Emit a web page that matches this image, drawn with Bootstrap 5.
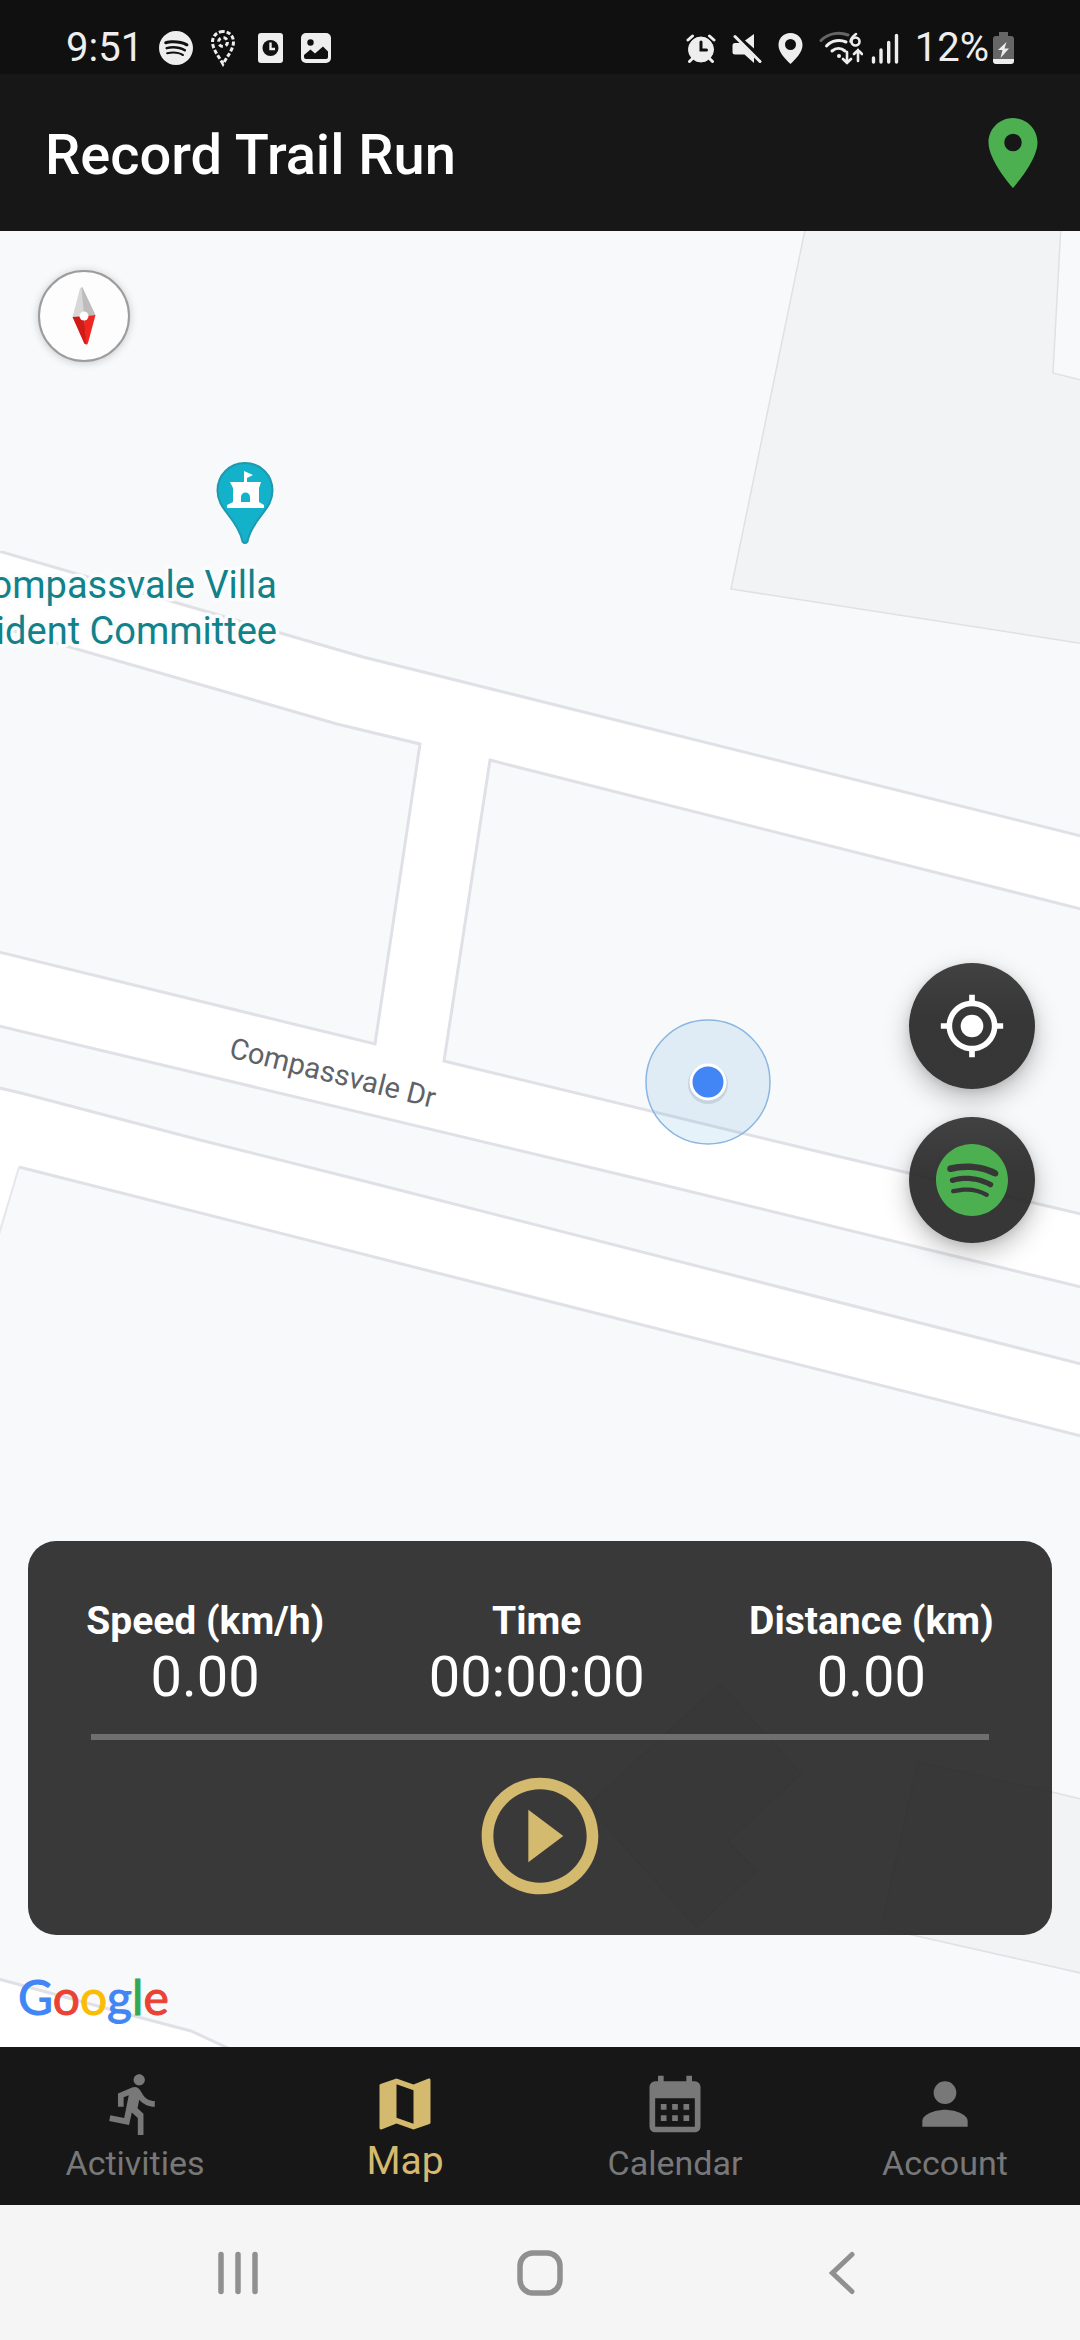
<!DOCTYPE html>
<html lang="en">
<head>
<meta charset="utf-8">
<meta name="viewport" content="width=device-width, initial-scale=1">
<title>Record Trail Run</title>
<link href="https://cdn.jsdelivr.net/npm/bootstrap@5.3.0/dist/css/bootstrap.min.css" rel="stylesheet">
<style>
  body { font-family: Roboto, "Liberation Sans", sans-serif; background: #f8f9fb; }
  svg { display: block; flex: none; }
  .status-bar { height: 74px; padding: 22px 66px 0 66px; background: #101010; color: #eee; font-size: 40px; line-height: 52px; }
  .app-bar { height: 157px; padding: 0 25px 0 45px; background: #171717; }
  .app-title { font-size: 56px; line-height: 64px; font-weight: 500; color: #fff; padding-top: 5px; }
  .icon-btn { border: 0; background: none; padding: 0; }
  .map-area { background: #f8f9fb; }
  .map-canvas { inset: 0; width: 100%; height: 100%; }
  .map-over { padding: 39px 28px 0 28px; }
  .compass-btn { width: 92px; height: 92px; margin-left: 10px; border: 2px solid #9c9c9c; border-radius: 50%; background: #fdfdfd; padding: 0; box-shadow: 0 1px 8px rgba(0,0,0,.2); }
  .fab-stack { gap: 28px; margin: 0 17px 298px 0; }
  .fab-btn { width: 126px; height: 126px; border: 0; border-radius: 50%; padding: 0; background: linear-gradient(rgba(50,50,50,.92), rgba(38,38,38,.92) 45%); box-shadow: 0 10px 26px rgba(0,0,0,.25), 0 2px 8px rgba(0,0,0,.1); }
  .stats-card { height: 394px; border-radius: 28px; background: rgba(35,35,35,.9); color: #fff; padding-top: 57px; }
  .stats-row { padding: 0 6px; }
  .stat-name { font-size: 39px; line-height: 46px; font-weight: 700; }
  .stat-value { font-size: 56px; line-height: 66px; margin: 0; }
  .stats-rule { height: 6px; margin: 24px 63px 26px; background: #6f6f6f; opacity: 1; border: 0; }
  .wordmark { height: 112px; padding: 32px 0 0 0; margin-left: -10px; font-family: Lato, "Open Sans", sans-serif; font-size: 48px; line-height: 60px; -webkit-text-stroke: 1px; }
  .g-blue { color: #4285f4; } .g-red { color: #ea4335; } .g-yellow { color: #fbbc05; } .g-green { color: #34a853; }
  .tab-bar { height: 158px; padding-top: 23px; background: #171717; }
  .tab-link { color: #787878; font-size: 34px; line-height: 50px; text-decoration: none; }
  .tab-link.active { color: #d4ba6e; font-size: 39px; line-height: 46px; }
  .sys-bar { height: 135px; padding: 0 87px; background: #f5f5f5; }
</style>
</head>
<body>
<div class="d-flex flex-column min-vh-100">

  <div class="status-bar d-flex justify-content-between align-items-center">
    <div class="d-flex align-items-center">
      <span class="me-3">9:51</span>
      <svg class="me-3" width="34" height="34" viewBox="0 0 24 24" fill="#eee" aria-label="Spotify"><path d="M12 0C5.4 0 0 5.4 0 12s5.4 12 12 12 12-5.4 12-12S18.66 0 12 0zm5.521 17.34c-.24.359-.66.48-1.021.24-2.82-1.74-6.36-2.101-10.561-1.141-.418.122-.779-.179-.899-.539-.12-.421.18-.78.54-.9 4.56-1.021 8.52-.6 11.64 1.32.42.18.479.659.301 1.02zm1.44-3.3c-.301.42-.841.6-1.262.3-3.239-1.98-8.159-2.58-11.939-1.38-.479.12-1.02-.12-1.14-.6-.12-.48.12-1.021.6-1.141C9.6 9.9 15 10.561 18.72 12.84c.361.181.54.78.241 1.2zm.12-3.36C15.24 8.4 8.82 8.16 5.16 9.301c-.6.179-1.2-.181-1.38-.721-.18-.601.18-1.2.72-1.381 4.26-1.26 11.28-1.02 15.721 1.621.539.3.719 1.02.419 1.56-.299.421-1.02.599-1.559.3z"/></svg>
      <svg width="28" height="38" viewBox="0 0 28 38" fill="none" stroke="#eee" stroke-width="3"><path d="M14 2.500C7.500 2.500 3.500 7.500 3.500 13c0 7 6 14 10.500 22C18.500 27 24.500 20 24.500 13c0-5.500-4-10.500-10.500-10.500z" stroke-dasharray="4.200 2"/><circle cx="14" cy="13" r="4.500" stroke-dasharray="4 3.070"/></svg>
      <svg class="ms-3 ps-1" width="32" height="32" viewBox="0 0 28 32"><rect x="1" y="1" width="25" height="30" rx="3" fill="#eee"/><circle cx="13.500" cy="16" r="8" fill="#101010"/><path d="M13.500 10.500V17H18" fill="none" stroke="#eee" stroke-width="2.400"/></svg>
      <svg class="ms-3" width="30" height="30" viewBox="0 0 30 30"><rect width="30" height="30" rx="5" fill="#eee"/><circle cx="9.500" cy="9.500" r="3.200" fill="#101010"/><path d="M3 24v-2l6.500-5.500 4.500 4L22 13.500l5 5V24a2 2 0 0 1-2 2H5a2 2 0 0 1-2-2z" fill="#101010"/></svg>
    </div>
    <div class="d-flex align-items-center">
      <svg class="me-3" width="30" height="30" viewBox="0 0 30 30" stroke="#eee" stroke-linecap="round"><circle cx="15" cy="16.500" r="12.500" fill="#eee"/><path d="M2 7l4.500-4M28 7l-4.500-4M6 26l-2.500 2.500M24 26l2.500 2.500" stroke-width="3"/><path d="M15 9v8h5.500" stroke="#101010" stroke-width="3" fill="none"/></svg>
      <svg class="me-3" width="30" height="31" viewBox="0 0 30 31"><path d="M22 1v14.500l-9-8zM3 10h5l14 14v6l-9.500-8.500H3a2.500 2.500 0 0 1-2.500-2.500v-6.500A2.500 2.500 0 0 1 3 10z" fill="#eee"/><path d="M3 3.500l25 25" stroke="#eee" stroke-width="3" stroke-linecap="round"/></svg>
      <svg class="me-3" width="25" height="31" viewBox="0 0 25 31"><path d="M12.500 0C5.500 0 .5 5.300.5 12c0 7.500 6.500 13.500 12 19 5.500-5.500 12-11.500 12-19C24.500 5.300 19.500 0 12.500 0zm0 17a5.500 5.500 0 1 1 0-11 5.500 5.500 0 0 1 0 11z" fill="#eee" fill-rule="evenodd"/></svg>
      <svg class="me-2" width="44" height="34" viewBox="0 0 44 34" fill="none" stroke="#eee" stroke-width="3" stroke-linecap="round"><path d="M2 9.500C10 1.500 21 1 29 4" stroke="#666"/><path d="M7.500 15C13 9 21 8.500 27 11M13 20c4-3.500 9-3.500 13 0"/><circle cx="20" cy="25" r="2" fill="#eee" stroke="none"/><path d="M37 3c-4 3-5.500 5-5.500 7.500" stroke-width="2.600"/><circle cx="36.500" cy="10.500" r="4" stroke-width="2.600"/><path d="M28 21v11m-4-4l4 4 4-4M39 30V19m-4 4l4-4 4 4" stroke-width="2.600"/></svg>
      <svg class="me-3" width="28" height="31" viewBox="0 0 28 31" stroke="#eee" stroke-width="3.400" stroke-linecap="round"><path d="M2.500 25v4M10 17v12M17.700 9.500V29M25.500 2.500V29"/></svg>
      <span>12%</span>
      <svg class="ms-1" width="21" height="32" viewBox="0 0 21 32"><path d="M6 0h9v4h3a3 3 0 0 1 3 3v20H0V7a3 3 0 0 1 3-3h3z" fill="#666"/><path d="M0 27h21v2a3 3 0 0 1-3 3H3a3 3 0 0 1-3-3z" fill="#eee"/><path d="M13.500 10L5 18h4.500l-2 8L16 16.500h-4.500z" fill="#eee"/></svg>
    </div>
  </div>

  <header class="app-bar d-flex justify-content-between align-items-center">
    <h1 class="app-title m-0">Record Trail Run</h1>
    <button class="icon-btn" type="button" aria-label="GPS status">
      <svg width="84" height="84" viewBox="0 0 24 24" fill="#4caf50"><path d="M12 2C8.130 2 5 5.130 5 9c0 5.250 7 13 7 13s7-7.750 7-13c0-3.870-3.130-7-7-7zm0 9.500a2.500 2.500 0 1 1 0-5 2.500 2.500 0 0 1 0 5z"/></svg>
    </button>
  </header>

  <main class="map-area position-relative flex-grow-1 d-flex flex-column overflow-hidden">
    <svg class="map-canvas position-absolute" viewBox="0 231 1080 1816" preserveAspectRatio="xMidYMid slice" role="img" aria-label="Map">
      <rect y="231" width="1080" height="1816" fill="#fff"/>
      <!-- land between the roads -->
      <g fill="#f8f9fb" stroke="#e0e1e6" stroke-width="3">
        <path d="M-5 225H1085V837L363 657 0 551.500l-5-2z"/>
        <path d="M-5 626L0 627l337 97 83 20-45 300L-5 951z"/>
        <path d="M490 760l27 7 568 143V1215L820 1152 444 1061z"/>
        <path d="M-5 1025L200 1074 643 1180 1085 1288V1365L360 1180 200 1140 21 1093l-26-6z"/>
        <path d="M19 1167L1085 1437V2060H250L226 2047 191 2031 138 2017 17 1984 -5 1978V1240z" stroke="none"/>
        <path d="M19 1167L1085 1437M-5 1978l22 6 121 33 53 14 39 18" fill="none"/>
        <path d="M19 1167L-2 1238" stroke-width="2" stroke="#e6e7ea"/>
      </g>
      <!-- buildings -->
      <g fill="#f1f3f4" stroke="#dfe1e4" stroke-width="1.500">
        <path d="M806 225L731 589l354 55V381l-32-8 8-148z"/>
        <path d="M918 1762l134 30 33 8v174l-62-14-142-32z"/>
        <path d="M720 1684l81 90-73 67 28 30-60 56-97-109-7-16z"/>
      </g>
      <!-- point of interest -->
      <path d="M245 463c-15.500 0-27.500 12-27.500 27.500 0 10 4.500 16 10.500 24 7.500 9.500 12.500 17 14.500 27q2.500 3 5 0c2-10 7-17.500 14.500-27 6-8 10.500-14 10.500-24C272.500 475 260.500 463 245 463z" fill="#14b1cb" stroke="#1d9aad" stroke-width="2"/>
      <path d="M244 471l9 4-6 3v4h14l-2 6v14l5 3v3h-37v-3l6-3v-14l-3-6h14zM241 502h9v-5a4.500 4.500 0 0 0-9 0z" fill="#fff" fill-rule="evenodd"/>
      <g font-family="Roboto, sans-serif" font-size="38" fill="#11818a" text-anchor="end" stroke="#fbfcfd" stroke-width="7" stroke-linejoin="round" paint-order="stroke">
        <text x="277" y="598">Compassvale Villa</text>
        <text x="277" y="644">Resident Committee</text>
      </g>
      <text transform="translate(228 1057) rotate(14)" font-family="Roboto, sans-serif" font-size="29" fill="#5f6368">Compassvale Dr</text>
      <!-- current location -->
      <circle cx="708" cy="1082" r="62" fill="#4aa3df" fill-opacity=".14" stroke="#8ab6e0" stroke-width="1.500"/>
      <circle cx="708" cy="1084" r="20" fill="#000" fill-opacity=".1"/>
      <circle cx="708" cy="1082" r="17" fill="#4285f4" stroke="#fff" stroke-width="3"/>
    </svg>

    <div class="map-over position-relative flex-grow-1 d-flex flex-column">
      <button class="compass-btn d-flex align-items-center justify-content-center" type="button" aria-label="Reset compass">
        <svg width="24" height="58" viewBox="0 0 24 58"><path d="M8 1.500Q9.500-.5 11 1.500L12 29 .500 30z" fill="#d8d8d8"/><path d="M9.500 0q1 0 1.500 1.500L23.500 28 12 29z" fill="#bdbdbd"/><path d="M.500 30L12 29l3 28q-2 1-3-1z" fill="#d01b17"/><path d="M12 29l11.500-1L16 56q-.5 1.500-2 1.500z" fill="#ee2722"/><circle cx="12" cy="29" r="4.500" fill="#fff"/></svg>
      </button>

      <div class="fab-stack d-flex flex-column align-self-end mt-auto">
        <button class="fab-btn d-flex align-items-center justify-content-center" type="button" aria-label="My location">
          <svg width="68" height="68" viewBox="0 0 24 24" fill="#fff"><circle cx="12" cy="12" r="4"/><path d="M20.940 11c-.46-4.170-3.770-7.480-7.940-7.940V1h-2v2.060C6.830 3.520 3.520 6.830 3.060 11H1v2h2.060c.46 4.170 3.770 7.480 7.940 7.940V23h2v-2.060c4.170-.46 7.480-3.770 7.940-7.940H23v-2h-2.060zM12 19c-3.870 0-7-3.130-7-7s3.130-7 7-7 7 3.130 7 7-3.130 7-7 7z"/></svg>
        </button>
        <button class="fab-btn d-flex align-items-center justify-content-center" type="button" aria-label="Open Spotify">
          <svg width="72" height="72" viewBox="0 0 24 24" fill="#4caf50"><path d="M12 0C5.4 0 0 5.4 0 12s5.4 12 12 12 12-5.4 12-12S18.66 0 12 0zm5.521 17.34c-.24.359-.66.48-1.021.24-2.82-1.74-6.36-2.101-10.561-1.141-.418.122-.779-.179-.899-.539-.12-.421.18-.78.54-.9 4.56-1.021 8.52-.6 11.64 1.32.42.18.479.659.301 1.02zm1.44-3.3c-.301.42-.841.6-1.262.3-3.239-1.98-8.159-2.58-11.939-1.38-.479.12-1.02-.12-1.14-.6-.12-.48.12-1.021.6-1.141C9.6 9.9 15 10.561 18.72 12.84c.361.181.54.78.241 1.2zm.12-3.36C15.24 8.4 8.82 8.16 5.16 9.301c-.6.179-1.2-.181-1.38-.721-.18-.601.18-1.2.72-1.381 4.26-1.26 11.28-1.02 15.721 1.621.539.3.719 1.02.419 1.56-.299.421-1.02.599-1.559.3z"/></svg>
        </button>
      </div>

      <section class="stats-card">
        <div class="stats-row d-flex justify-content-around text-center">
          <div><div class="stat-name">Speed (km/h)</div><p class="stat-value">0.00</p></div>
          <div><div class="stat-name">Time</div><p class="stat-value">00:00:00</p></div>
          <div><div class="stat-name">Distance (km)</div><p class="stat-value">0.00</p></div>
        </div>
        <hr class="stats-rule">
        <button class="icon-btn d-block mx-auto" type="button" aria-label="Start recording">
          <svg width="140" height="140" viewBox="0 0 24 24" fill="#d4ba6e"><path d="M10 16.500l6-4.500-6-4.500v9zM12 2C6.480 2 2 6.480 2 12s4.480 10 10 10 10-4.480 10-10S17.520 2 12 2zm0 18c-4.410 0-8-3.590-8-8s3.590-8 8-8 8 3.590 8 8-3.590 8-8 8z"/></svg>
        </button>
      </section>

      <div class="wordmark"><span class="g-blue">G</span><span class="g-red">o</span><span class="g-yellow">o</span><span class="g-blue">g</span><span class="g-green">l</span><span class="g-red">e</span></div>
    </div>
  </main>

  <nav class="tab-bar row g-0 position-relative text-center">
    <a class="tab-link col d-flex flex-column align-items-center" href="#activities">
      <svg width="68" height="68" viewBox="0 0 24 24" fill="currentColor"><path d="M13.490 5.480c1.100 0 2-.9 2-2s-.9-2-2-2-2 .9-2 2 .9 2 2 2zm-3.600 13.900l1-4.400 2.100 2v6h2v-7.500l-2.100-2 .6-3c1.300 1.500 3.300 2.500 5.500 2.500v-2c-1.900 0-3.500-1-4.300-2.400l-1-1.600c-.4-.6-1-1-1.700-1-.3 0-.5.1-.8.1l-5.200 2.200v4.700h2v-3.400l1.800-.7-1.600 8.100-4.900-1-.4 2 7 1.400z"/></svg>
      Activities
    </a>
    <a class="tab-link active col d-flex flex-column align-items-center" href="#map" aria-current="page">
      <svg width="68" height="68" viewBox="0 0 24 24" fill="currentColor"><path d="M20.500 3l-.16.03L15 5.100 9 3 3.360 4.900c-.21.07-.36.25-.36.48V20.500c0 .28.22.5.5.5l.16-.03L9 18.900l6 2.100 5.640-1.900c.21-.07.36-.25.36-.48V3.500c0-.28-.22-.5-.5-.5zM15 19l-6-2.110V5l6 2.110V19z"/></svg>
      Map
    </a>
    <a class="tab-link col d-flex flex-column align-items-center" href="#calendar">
      <svg width="68" height="68" viewBox="0 0 24 24" fill="currentColor"><path d="M6 2h2v2h8V2h2v2h1a2 2 0 0 1 2 2v14a2 2 0 0 1-2 2H5a2 2 0 0 1-2-2V6a2 2 0 0 1 2-2h1zM5 10v10h14V10z" fill-rule="evenodd"/><path d="M7 12h2v2H7zM11 12h2v2h-2zM15 12h2v2h-2zM7 16h2v2H7zM11 16h2v2h-2zM15 16h2v2h-2z"/></svg>
      Calendar
    </a>
    <a class="tab-link col d-flex flex-column align-items-center" href="#account">
      <svg width="68" height="68" viewBox="0 0 24 24" fill="currentColor"><circle cx="12" cy="8" r="4"/><path d="M12 14c-2.670 0-8 1.340-8 4v2h16v-2c0-2.660-5.330-4-8-4z"/></svg>
      Account
    </a>
  </nav>

  <div class="sys-bar row g-0 align-items-center">
    <button class="icon-btn col d-flex justify-content-center" type="button" aria-label="Recent apps">
      <svg width="40" height="44" viewBox="0 0 40 44" stroke="#909090" stroke-width="5.500" stroke-linecap="round"><path d="M3 3.500v37M20 3.500v37M37 3.500v37"/></svg>
    </button>
    <button class="icon-btn col d-flex justify-content-center" type="button" aria-label="Home">
      <svg width="46" height="46" viewBox="0 0 46 46" fill="none" stroke="#909090" stroke-width="5.500"><rect x="3" y="3" width="40" height="40" rx="13"/></svg>
    </button>
    <button class="icon-btn col d-flex justify-content-center" type="button" aria-label="Back">
      <svg width="26" height="44" viewBox="0 0 26 44" fill="none" stroke="#909090" stroke-width="5" stroke-linecap="round"><path d="M23 3.500L3.500 22 23 40.500"/></svg>
    </button>
  </div>
</div>
<script src="https://cdn.jsdelivr.net/npm/bootstrap@5.3.0/dist/js/bootstrap.bundle.min.js"></script>
</body>
</html>
